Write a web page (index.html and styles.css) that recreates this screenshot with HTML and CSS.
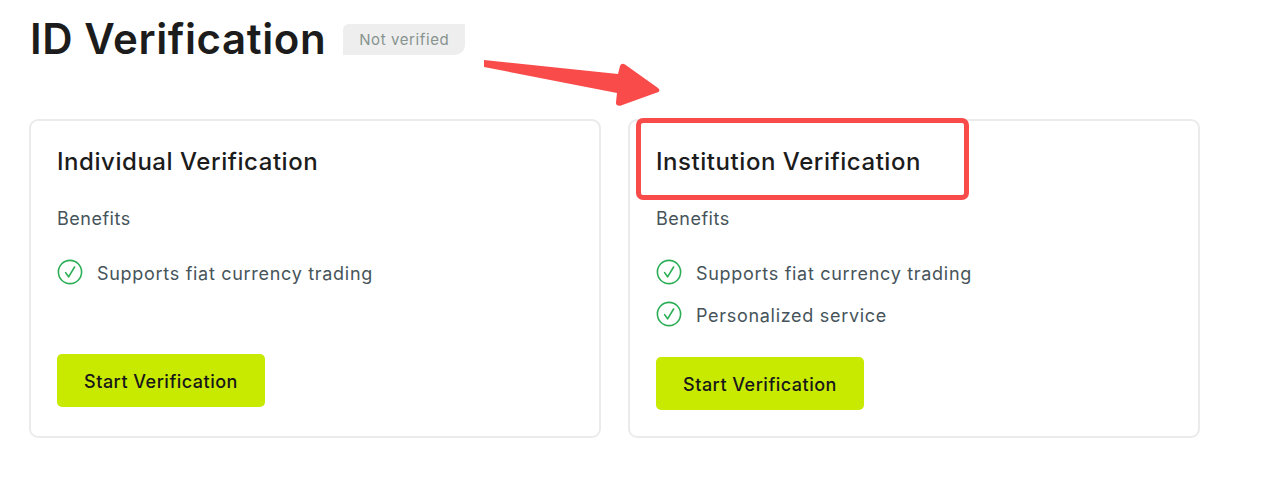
FILE: index.html
```html
<!DOCTYPE html>
<html lang="en">

<head>
    <meta charset="UTF-8">
    <meta name="viewport" content="width=device-width, initial-scale=1.0">
    <title>ID Verification</title>
    <link rel="stylesheet" href="styles.css">
</head>

<body>
    <div class="page">
        <div class="header">
            <h1 class="title">ID Verification</h1>
            <span class="badge">Not verified</span>
        </div>

        <div class="cards">
            <div class="card">
                <h2 class="card-title">Individual Verification</h2>
                <p class="benefits">Benefits</p>
                <ul class="list">
                    <li class="item">
                        <svg class="check" viewBox="0 0 26 26"><circle cx="13" cy="13" r="11.6"/><path d="M8.6 13.6l3 4.2L17.6 8"/></svg>
                        Supports fiat currency trading
                    </li>
                </ul>
                <a class="btn">Start Verification</a>
            </div>

            <div class="card">
                <h2 class="card-title">Institution Verification</h2>
                <p class="benefits">Benefits</p>
                <ul class="list">
                    <li class="item">
                        <svg class="check" viewBox="0 0 26 26"><circle cx="13" cy="13" r="11.6"/><path d="M8.6 13.6l3 4.2L17.6 8"/></svg>
                        Supports fiat currency trading
                    </li>
                    <li class="item">
                        <svg class="check" viewBox="0 0 26 26"><circle cx="13" cy="13" r="11.6"/><path d="M8.6 13.6l3 4.2L17.6 8"/></svg>
                        Personalized service
                    </li>
                </ul>
                <a class="btn">Start Verification</a>
            </div>
        </div>
    </div>

    <!-- red annotation drawn over the screenshot -->
    <svg class="arrow" viewBox="0 0 190 50">
        <path d="M2 0L136 14L138 6C139 3.500 141 3 143 4.500L176 28C178 30 178 31.500 175 32.500L139 45.500C136 46.500 133.500 45 134 42L135 33L2 7Z"/>
    </svg>
    <div class="highlight"></div>
</body>

</html>
```

FILE: styles.css
```css
html,
body {
    margin: 0;
    padding: 0;
    background: #fff;
    font-family: "Inter", "Noto Sans", sans-serif;
}

.page {
    padding: 11px 0 0 29px;
    width: 1171px;
}

.header {
    display: flex;
    align-items: flex-start;
    height: 108px;
}

.title {
    margin: 0;
    padding-left: 1px;
    font-size: 42px;
    line-height: 56px;
    font-weight: 600;
    letter-spacing: 0.6px;
    color: #1c1c1c;
}

.badge {
    margin: 13px 0 0 17px;
    width: 122px;
    height: 31px;
    line-height: 31px;
    text-align: center;
    font-size: 15px;
    letter-spacing: 0.6px;
    color: #87938f;
    background: #eeeeee;
    border-radius: 6px 0 10px 0;
}

.cards {
    display: flex;
    gap: 27px;
}

.card {
    box-sizing: border-box;
    width: 572px;
    height: 319px;
    padding: 25px 26px;
    border: 2px solid #ebebeb;
    border-radius: 9px;
}

.card-title {
    margin: 0;
    font-size: 24px;
    line-height: 32px;
    font-weight: 500;
    letter-spacing: 0.55px;
    color: #1c1c1c;
}

.benefits {
    margin: 29px 0 0;
    font-size: 18px;
    line-height: 24px;
    letter-spacing: 0.5px;
    color: #46545a;
}

.list {
    list-style: none;
    margin: 21px 0 0;
    padding: 0;
    min-height: 81px;
}

.item {
    display: flex;
    align-items: center;
    height: 42px;
    gap: 14px;
    font-size: 18px;
    letter-spacing: 0.7px;
    color: #46545a;
}

.check {
    flex: none;
    width: 26px;
    height: 26px;
    margin-bottom: 2px;
    fill: none;
    stroke: #2bae55;
    stroke-width: 1.600;
    stroke-linecap: round;
    stroke-linejoin: round;
}

.btn {
    box-sizing: border-box;
    display: flex;
    align-items: center;
    justify-content: center;
    width: 208px;
    height: 53px;
    margin-top: 21px;
    padding-top: 2px;
    font-size: 18px;
    font-weight: 500;
    letter-spacing: 0.5px;
    color: #17171a;
    background: #c8ea00;
    border-radius: 5px;
}

.arrow {
    position: absolute;
    left: 482px;
    top: 60px;
    width: 190px;
    height: 50px;
    fill: #f94c4a;
}

.highlight {
    position: absolute;
    left: 636px;
    top: 118px;
    width: 323px;
    height: 72px;
    border: 5px solid #f94c4a;
    border-radius: 7px;
}
```
